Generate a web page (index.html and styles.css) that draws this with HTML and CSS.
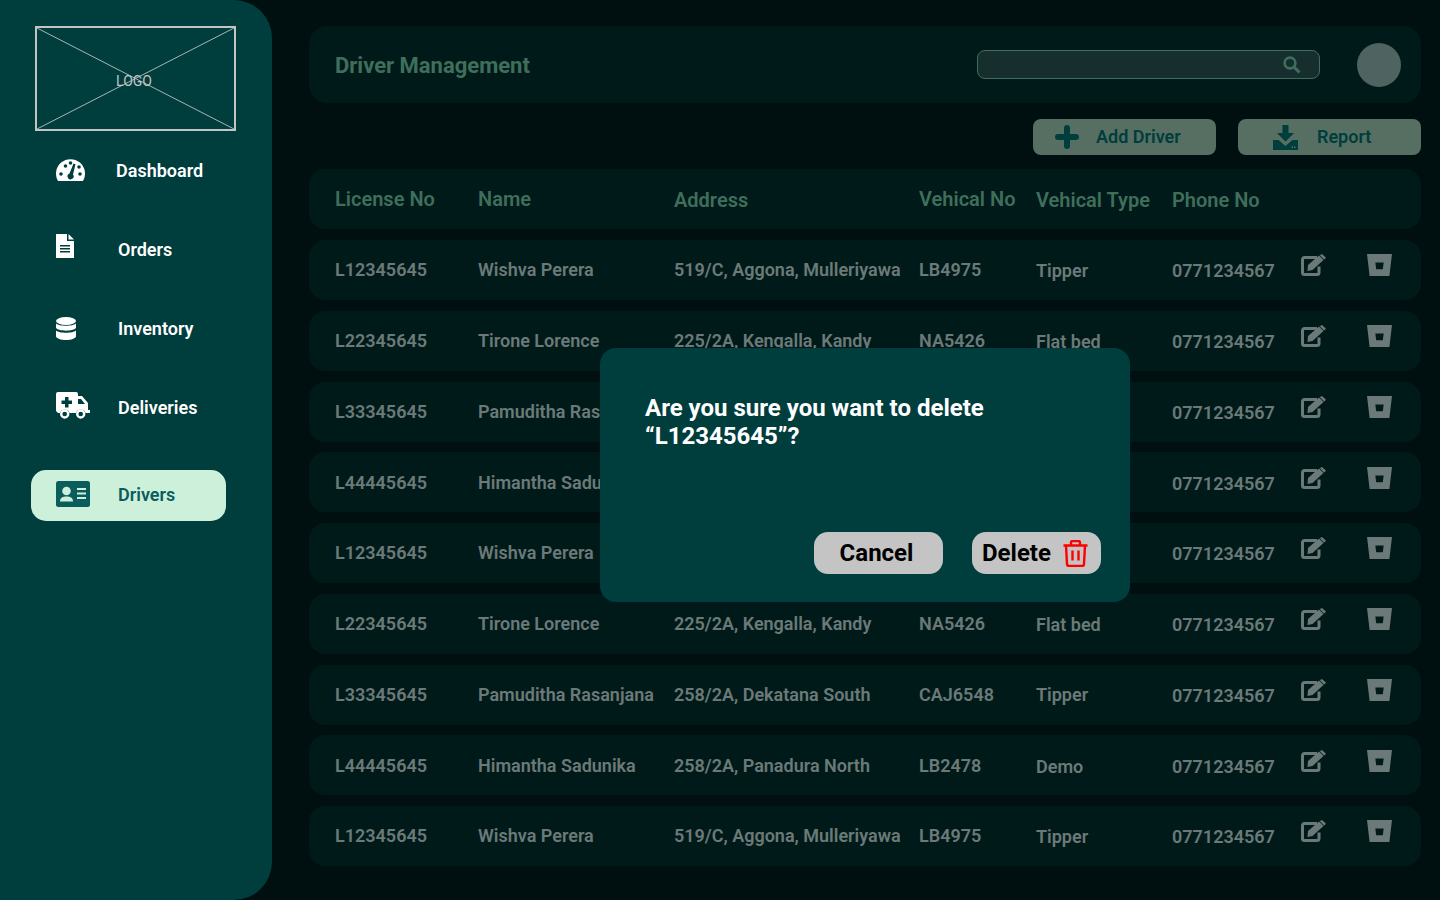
FILE: index.html
```html
<!DOCTYPE html>
<html lang="en">
<head>
    <meta charset="UTF-8">
    <meta name="viewport" content="width=device-width, initial-scale=1.0">
    <title>Driver Management</title>
    <link rel="stylesheet" href="styles.css">
</head>
<body>

    <!-- Shared row icons -->
    <svg class="icon-defs" aria-hidden="true">
        <symbol id="icon-edit" viewBox="0 0 25 22">
            <path d="M16 3.500H3.500A2 2 0 0 0 1.500 5.500V18.500A2 2 0 0 0 3.500 20.500H16A2 2 0 0 0 18 18.500V12.500" fill="none" stroke="currentColor" stroke-width="3"/>
            <path d="M7 11 18 1.500 22.500 6 11.500 16 6.500 17Z" fill="currentColor"/>
            <path d="M19.500 .8 21 0 24.800 3.500 24 5 23 5.500 19 1.500Z" fill="currentColor"/>
        </symbol>
        <symbol id="icon-bin" viewBox="0 0 24 21">
            <path fill-rule="evenodd" d="M0 0H24L21.500 21H2.500ZM8 8 8.800 14.500H15.200L16 8Z" fill="currentColor"/>
        </symbol>
    </svg>

    <!-- Sidebar -->
    <aside class="sidebar">
        <div class="logo">
            <svg class="logo-cross" viewBox="0 0 197 101" preserveAspectRatio="none">
                <path d="M0 0 197 101M197 0 0 101" stroke="#a9b5b2" stroke-width="1" fill="none"/>
            </svg>
            <span class="logo-text">LOGO</span>
        </div>
        <nav class="nav">
            <a class="nav-item nav-dashboard" href="#">
                <svg class="nav-icon" width="29" height="23" viewBox="0 0 29 23">
                    <path d="M2 23A14.500 14.500 0 1 1 27 23Z" fill="#fff"/>
                    <g fill="#003d3d">
                        <circle cx="5" cy="16" r="1.800"/>
                        <circle cx="9.500" cy="8" r="1.800"/>
                        <circle cx="14.500" cy="5" r="1.800"/>
                        <circle cx="24" cy="16" r="1.800"/>
                        <circle cx="23" cy="9" r="1.800"/>
                        <path d="M17.500 5.500 19.500 6.200 17 16.500A3 3 0 1 1 13.500 15.500Z"/>
                    </g>
                </svg>
                <span>Dashboard</span>
            </a>
            <a class="nav-item nav-orders" href="#">
                <svg class="nav-icon" width="18" height="24" viewBox="0 0 18 24">
                    <path fill-rule="evenodd" d="M0 0H11V7H18V24H0ZM4 11V12.500H14V11ZM4 14V15.500H14V14ZM4 17V18.500H14V17Z" fill="#fff"/>
                    <path d="M12.500 0 18 5.500H12.500Z" fill="#fff"/>
                </svg>
                <span>Orders</span>
            </a>
            <a class="nav-item nav-inventory" href="#">
                <svg class="nav-icon" width="20" height="23" viewBox="0 0 20 23">
                    <ellipse cx="10" cy="4" rx="10" ry="4" fill="#fff"/>
                    <path d="M0 6.500C3 9.500 17 9.500 20 6.500V11C17 14.500 3 14.500 0 11Z" fill="#fff"/>
                    <path d="M0 13.500C3 16.500 17 16.500 20 13.500V19C20 21.500 15 23 10 23S0 21.500 0 19Z" fill="#fff"/>
                </svg>
                <span>Inventory</span>
            </a>
            <a class="nav-item nav-deliveries" href="#">
                <svg class="nav-icon" width="34" height="27" viewBox="0 0 34 27">
                    <path fill-rule="evenodd" d="M2 0H20A2 2 0 0 1 22 2V4H26L32 11V18H34V21H29.500A5 5 0 0 0 20 21H13.500A5 5 0 0 0 4 21H2L0 19V2A2 2 0 0 1 2 0ZM22 7V12H29L25 7ZM9 5V8.500H5.500V12H9V15.500H12.500V12H16V8.500H12.500V5Z" fill="#fff"/>
                    <circle cx="8.700" cy="22" r="3.500" fill="none" stroke="#fff" stroke-width="2.400"/>
                    <circle cx="24.700" cy="22" r="3.500" fill="none" stroke="#fff" stroke-width="2.400"/>
                </svg>
                <span>Deliveries</span>
            </a>
            <a class="nav-item nav-active" href="#">
                <svg class="nav-icon" width="34" height="26" viewBox="0 0 34 26">
                    <rect width="34" height="26" rx="2.500" fill="#0b5c5c"/>
                    <circle cx="10.500" cy="10" r="4.300" fill="#ccf0da"/>
                    <path d="M4 20.500C4 16.500 7 15.500 10.500 15.500S17 16.500 17 20.500Z" fill="#ccf0da"/>
                    <path d="M21 8H30M21 12.500H30M21 17H30" stroke="#ccf0da" stroke-width="1.800"/>
                </svg>
                <span>Drivers</span>
            </a>
        </nav>
    </aside>

    <!-- Main content -->
    <main class="main">
        <header class="topbar">
            <h1 class="page-title">Driver Management</h1>
            <div class="search">
                <svg width="18" height="18" viewBox="0 0 18 18">
                    <circle cx="7" cy="7" r="5.400" fill="none" stroke="#3f6f5a" stroke-width="2.600"/>
                    <path d="M11 11 16.500 16.500" stroke="#3f6f5a" stroke-width="3"/>
                </svg>
            </div>
            <div class="avatar"></div>
        </header>

        <div class="toolbar">
            <button class="tool-btn tool-add">
                <svg width="24" height="24" viewBox="0 0 24 24">
                    <path d="M12 3V21M3 12H21" stroke="#003d3d" stroke-width="6" stroke-linecap="round"/>
                </svg>
                Add Driver
            </button>
            <button class="tool-btn tool-report">
                <svg width="25" height="25" viewBox="0 0 25 25">
                    <path d="M9.500 0H15.500V8H21L12.500 16.500 4 8H9.500Z" fill="#003d3d"/>
                    <path fill-rule="evenodd" d="M0 15H5.500L12.500 21 19.500 15H25V25H0ZM18.500 21.500V23H20V21.500ZM21 21.500V23H22.500V21.500Z" fill="#003d3d"/>
                </svg>
                Report
            </button>
        </div>

        <section class="table">
            <div class="row row-head">
                <div>License No</div>
                <div>Name</div>
                <div class="nudge">Address</div>
                <div>Vehical No</div>
                <div class="nudge">Vehical Type</div>
                <div class="nudge">Phone No</div>
            </div>

            <div class="row">
                <div>L12345645</div><div>Wishva Perera</div><div>519/C, Aggona, Mulleriyawa</div><div>LB4975</div>
                <div class="nudge">Tipper</div><div class="nudge">0771234567</div>
                <svg class="row-icon"><use href="#icon-edit"/></svg><svg class="row-icon"><use href="#icon-bin"/></svg>
            </div>
            <div class="row">
                <div>L22345645</div><div>Tirone Lorence</div><div>225/2A, Kengalla, Kandy</div><div>NA5426</div>
                <div class="nudge">Flat bed</div><div class="nudge">0771234567</div>
                <svg class="row-icon"><use href="#icon-edit"/></svg><svg class="row-icon"><use href="#icon-bin"/></svg>
            </div>
            <div class="row">
                <div>L33345645</div><div>Pamuditha Rasanjana</div><div>258/2A, Dekatana South</div><div>CAJ6548</div>
                <div class="nudge">Tipper</div><div class="nudge">0771234567</div>
                <svg class="row-icon"><use href="#icon-edit"/></svg><svg class="row-icon"><use href="#icon-bin"/></svg>
            </div>
            <div class="row row-low">
                <div>L44445645</div><div>Himantha Sadunika</div><div>258/2A, Panadura North</div><div>LB2478</div>
                <div class="nudge">Demo</div><div class="nudge">0771234567</div>
                <svg class="row-icon"><use href="#icon-edit"/></svg><svg class="row-icon"><use href="#icon-bin"/></svg>
            </div>
            <div class="row">
                <div>L12345645</div><div>Wishva Perera</div><div>519/C, Aggona, Mulleriyawa</div><div>LB4975</div>
                <div class="nudge">Tipper</div><div class="nudge">0771234567</div>
                <svg class="row-icon"><use href="#icon-edit"/></svg><svg class="row-icon"><use href="#icon-bin"/></svg>
            </div>
            <div class="row">
                <div>L22345645</div><div>Tirone Lorence</div><div>225/2A, Kengalla, Kandy</div><div>NA5426</div>
                <div class="nudge">Flat bed</div><div class="nudge">0771234567</div>
                <svg class="row-icon"><use href="#icon-edit"/></svg><svg class="row-icon"><use href="#icon-bin"/></svg>
            </div>
            <div class="row">
                <div>L33345645</div><div>Pamuditha Rasanjana</div><div>258/2A, Dekatana South</div><div>CAJ6548</div>
                <div>Tipper</div><div class="nudge">0771234567</div>
                <svg class="row-icon"><use href="#icon-edit"/></svg><svg class="row-icon"><use href="#icon-bin"/></svg>
            </div>
            <div class="row row-low">
                <div>L44445645</div><div>Himantha Sadunika</div><div>258/2A, Panadura North</div><div>LB2478</div>
                <div class="nudge">Demo</div><div class="nudge">0771234567</div>
                <svg class="row-icon"><use href="#icon-edit"/></svg><svg class="row-icon"><use href="#icon-bin"/></svg>
            </div>
            <div class="row">
                <div>L12345645</div><div>Wishva Perera</div><div>519/C, Aggona, Mulleriyawa</div><div>LB4975</div>
                <div class="nudge">Tipper</div><div class="nudge">0771234567</div>
                <svg class="row-icon"><use href="#icon-edit"/></svg><svg class="row-icon"><use href="#icon-bin"/></svg>
            </div>
        </section>
    </main>

    <!-- Delete confirmation -->
    <div class="modal">
        <p class="modal-text">Are you sure you want to delete<br>“L12345645”?</p>
        <div class="modal-actions">
            <button class="modal-btn modal-cancel">Cancel</button>
            <button class="modal-btn modal-delete">
                Delete
                <svg width="25" height="27" viewBox="0 0 25 27">
                    <path d="M.5 5.500H24.500M8 5.500V2.500A1.500 1.500 0 0 1 9.500 1H15.500A1.500 1.500 0 0 1 17 2.500V5.500M3 5.500 4 24A2 2 0 0 0 6 26H19A2 2 0 0 0 21 24L22 5.500M9.500 10.500V20.500M15.500 10.500V20.500" fill="none" stroke="#ff0000" stroke-width="2.400"/>
                </svg>
            </button>
        </div>
    </div>

</body>
</html>
```

FILE: styles.css
```css
* {
    box-sizing: border-box;
}
body {
    font-family: Roboto, "Liberation Sans", sans-serif;
    font-weight: 600;
    margin: 0;
    height: 900px;
    display: flex;
    overflow: hidden;
    background-color: #000f0f;
}
.icon-defs {
    display: none;
}

/* Sidebar */
.sidebar {
    width: 272px;
    height: 900px;
    flex-shrink: 0;
    background-color: #003d3d;
    border-radius: 0 38px 38px 0;
    padding: 26px 0 0 35px;
}
.logo {
    position: relative;
    width: 201px;
    height: 105px;
    border: 2px solid #c4c4c4;
    display: flex;
    align-items: center;
    justify-content: center;
    padding-right: 3px;
    padding-top: 4px;
}
.logo-cross {
    position: absolute;
    left: 0;
    top: 0;
    width: 100%;
    height: 100%;
}
.logo-text {
    position: relative;
    color: #c4c4c4;
    font-size: 14px;
    font-weight: 400;
}
.nav {
    margin: 14px 0 0 -4px;
    display: flex;
    flex-direction: column;
    gap: 28px;
}
.nav-item {
    width: 195px;
    height: 51px;
    padding-left: 25px;
    display: flex;
    align-items: center;
    color: #fff;
    font-size: 18px;
    text-decoration: none;
}
.nav-item span {
    position: absolute;
    left: 118px;
}
.nav-dashboard span {
    left: 116px;
}
.nav-icon {
    flex-shrink: 0;
}
.nav-dashboard .nav-icon {
    margin-bottom: 3px;
}
.nav-orders .nav-icon {
    margin-bottom: 8px;
}
.nav-inventory .nav-icon {
    margin-bottom: 1px;
}
.nav-deliveries .nav-icon {
    margin-bottom: 5px;
}
.nav-active {
    margin-top: 9px;
    padding-bottom: 2px;
    background-color: #ccf0da;
    border-radius: 15px;
    color: #0b5c5c;
}
.nav-active .nav-icon {
    margin-bottom: 2px;
}

/* Main */
.main {
    flex: 1;
    padding: 26px 19px 0 37px;
}
.topbar {
    height: 77px;
    background-color: #001a1a;
    border-radius: 18px;
    display: flex;
    align-items: center;
    padding: 0 20px 0 26px;
}
.page-title {
    margin: 2px 0 0;
    flex: 1;
    color: #3f6f5a;
    font-size: 22px;
    font-weight: 700;
}
.search {
    width: 343px;
    height: 29px;
    background-color: #162e2e;
    border: 1px solid #3f6f5a;
    border-radius: 8px;
    display: flex;
    align-items: center;
    justify-content: flex-end;
    padding-right: 18px;
}
.avatar {
    width: 44px;
    height: 44px;
    margin-left: 37px;
    border-radius: 50%;
    background-color: #4f6360;
}
.toolbar {
    margin-top: 16px;
    display: flex;
    justify-content: flex-end;
    gap: 22px;
}
.tool-btn {
    width: 183px;
    height: 36px;
    border: none;
    border-radius: 8px;
    background-color: #566f62;
    color: #003d3d;
    font-family: inherit;
    font-size: 18px;
    font-weight: 600;
    display: flex;
    align-items: center;
    padding: 0 0 2px;
}
.tool-add {
    padding-left: 22px;
    gap: 17px;
}
.tool-report {
    padding-left: 35px;
    gap: 19px;
}
.tool-btn svg {
    margin-top: 2px;
}

/* Table */
.table {
    margin-top: 14px;
    display: flex;
    flex-direction: column;
    gap: 10.75px;
}
.row {
    height: 60px;
    background-color: #001a1a;
    border-radius: 16px;
    padding: 0 0 1px 26px;
    display: grid;
    grid-template-columns: 143px 196px 245px 117px 136px 129px 66px 24px;
    align-items: center;
    color: #6b7a78;
    font-size: 18px;
    white-space: nowrap;
}
.row-low {
    padding-bottom: 0;
}
.row-head {
    color: #3f6f5a;
    font-size: 20px;
    margin-bottom: 0.25px;
    padding-bottom: 0;
}
.nudge {
    padding-top: 2px;
}
.row-icon {
    width: 25px;
    height: 22px;
    margin-bottom: 9px;
    color: #6b7a78;
}

/* Modal */
.modal {
    position: absolute;
    left: 600px;
    top: 348px;
    width: 530px;
    height: 254px;
    background-color: #003d3d;
    border-radius: 16px;
    padding: 46px 29px 28px 45px;
    display: flex;
    flex-direction: column;
    justify-content: space-between;
}
.modal-text {
    margin: 0;
    color: #fff;
    font-size: 24px;
    font-weight: 700;
    line-height: 28px;
}
.modal-actions {
    display: flex;
    justify-content: flex-end;
    gap: 29px;
}
.modal-btn {
    width: 129px;
    height: 42px;
    border: none;
    border-radius: 14px;
    background-color: #c4c4c4;
    color: #000;
    font-family: inherit;
    font-size: 24px;
    font-weight: 700;
    display: flex;
    align-items: center;
    justify-content: center;
    padding: 0;
}
.modal-cancel {
    padding-right: 4px;
}
.modal-delete {
    justify-content: flex-start;
    padding-left: 10px;
    gap: 12px;
}
```
